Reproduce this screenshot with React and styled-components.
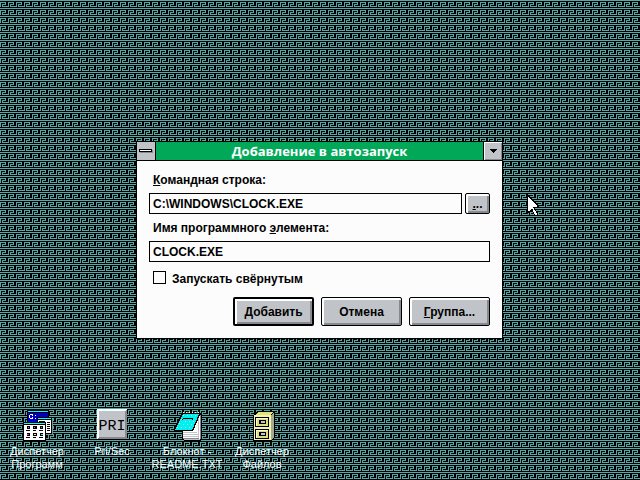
import React from 'react';
import styled, { createGlobalStyle } from 'styled-components';

// 8x8 greek key, repeated over the whole desktop
const TILE = [
    '########',
    '........',
    '######..',
    '#....#..',
    '#.####..',
    '#.#.....',
    '#.######',
    '........',
];

const tilePath = TILE.map((row, y) =>
    row
        .split('')
        .map((c, x) => (c === '#' ? `M${x} ${y}h1v1h-1z` : ''))
        .join(''),
).join('');

const wallpaper = `data:image/svg+xml,${encodeURIComponent(
    `<svg xmlns="http://www.w3.org/2000/svg" width="8" height="8" shape-rendering="crispEdges"><path fill="#000" d="M0 0h8v8h-8z"/><path fill="#57a8a8" d="${tilePath}"/></svg>`,
)}`;

const GlobalStyle = createGlobalStyle`
    * {
        box-sizing: border-box;
    }
    body {
        margin: 0;
        background: #000 url("${wallpaper}");
        font-family: 'Liberation Sans', Arial, sans-serif;
        font-size: 12px;
        color: #000;
    }
    u {
        text-underline-offset: 1px;
    }
`;

const Desktop = styled.div`
    display: flex;
    flex-direction: column;
    align-items: center;
    min-height: 100vh;
    padding: 141px 1px 0 0;
`;

const Window = styled.section`
    width: 100%;
    max-width: 367px;
    border: 1px solid #000;
    background: #fcfcfc;
`;

const TitleBar = styled.header`
    display: flex;
    height: 19px;
    border-bottom: 1px solid #000;
    background: #00a858;
`;

const Title = styled.h1`
    flex: 1;
    margin: 0;
    font-family: 'Open Sans', 'Liberation Sans', sans-serif;
    font-size: 13px;
    font-weight: bold;
    line-height: 18px;
    text-align: center;
    color: #fff;
`;

const FrameButton = styled.button`
    display: flex;
    align-items: center;
    justify-content: center;
    width: 19px;
    padding: 0;
    border: 0;
    background: #c0c4c8;
`;

const SystemButton = styled(FrameButton)`
    border-right: 1px solid #000;
`;

const MinimizeButton = styled(FrameButton)`
    border-left: 1px solid #000;
    box-shadow: inset 1px 1px #fff, inset -1px -1px #868a8e;
`;

const Form = styled.form`
    display: flex;
    flex-direction: column;
    padding: 11px 12px 12px;
`;

const Field = styled.div`
    display: flex;
    flex-direction: column;
    gap: 5px;
    margin-bottom: ${(props) => (props.$last ? '9px' : '6px')};
`;

const Label = styled.label`
    padding-left: 4px;
    font-weight: bold;
    line-height: 16px;
`;

const InputRow = styled.div`
    display: flex;
    gap: 3px;
`;

const TextInput = styled.input`
    flex: 1;
    min-width: 0;
    height: 21px;
    padding: 0 3px;
    border: 1px solid #000;
    border-radius: 0;
    outline: 0;
    background: #fcfcfc;
    font: bold 12px 'Liberation Sans', Arial, sans-serif;
    color: #000;
`;

const CheckLabel = styled.label`
    display: flex;
    align-items: flex-start;
    gap: 6px;
    height: 13px;
    padding-left: 4px;
    font-weight: bold;
    line-height: 16px;
`;

const Checkbox = styled.input`
    appearance: none;
    width: 13px;
    height: 13px;
    margin: 0;
    border: 1px solid #000;
    background: #fcfcfc;

    &:checked {
        background: linear-gradient(#000, #000) center / 7px 7px no-repeat;
    }
`;

const Buttons = styled.div`
    display: flex;
    justify-content: flex-end;
    gap: 7px;
    margin-top: 13px;
`;

const Button = styled.button`
    width: 81px;
    height: 29px;
    padding: 0;
    border: ${(props) => (props.$primary ? '2px' : '1px')} solid #000;
    border-radius: 2px;
    background: #c0c4c8;
    box-shadow: inset 2px 2px #fff, inset -2px -2px #868a8e;
    font: bold 12px 'Liberation Sans', Arial, sans-serif;
    color: #000;
`;

const BrowseButton = styled(Button)`
    width: 25px;
    height: 21px;
`;

const IconRow = styled.nav`
    display: flex;
    align-self: stretch;
    align-items: flex-start;
    gap: 1px;
    margin-top: auto;
    padding-bottom: 9px;
`;

const DesktopIcon = styled.button`
    display: flex;
    flex-direction: column;
    align-items: center;
    gap: 4px;
    width: 74px;
    padding: 0;
    border: 0;
    background: none;
    font: 11px 'Liberation Sans', Arial, sans-serif;
    line-height: 13px;
    white-space: pre;
    color: #fff;
`;

const Picture = styled.svg`
    display: block;
    width: 32px;
    height: 32px;
`;

const Pointer = styled.svg`
    position: absolute;
    top: 195px;
    left: 527px;
    pointer-events: none;
`;

const ProgramManagerIcon = () => (
    <Picture viewBox="0 0 32 32" shapeRendering="crispEdges">
        <path fill="#000" d="M6 1h22v15H6z" />
        <path fill="#00fcfc" d="M7 2h20v1H7z" />
        <path fill="#0000c8" d="M7 4h20v9H7z" />
        <path fill="#fff" d="M9 5h3v1H9zM8 6h1v3H8zM9 9h3v1H9zM11 6h1v1h-1zM11 8h1v1h-1zM14 6h1v1h-1zM14 9h1v1h-1z" />
        <path fill="#868a8e" d="M18 10h14v16H18z" />
        <path fill="#000" d="M16 8h15v17H16z" />
        <path fill="#00fcfc" d="M17 9h13v1H17z" />
        <path fill="#fff" d="M17 11h13v13H17z" />
        <path fill="#000" d="M26 13h3v1h-3zM26 15h3v1h-3zM26 17h3v1h-3zM26 19h3v1h-3zM26 21h3v1h-3zM18 12h6v1h-6z" />
        <path fill="#000" d="M2 13h23v19H2z" />
        <path fill="#00fcfc" d="M3 14h21v1H3z" />
        <path fill="#fff" d="M3 16h21v15H3z" />
        <path fill="#000" d="M6 17h3v3H6zM12 17h4v3h-4zM19 17h3v3h-3zM5 21h4v1H5zM12 21h3v1h-3zM18 21h4v1h-4zM6 24h3v3H6zM12 24h4v3h-4zM19 24h3v3h-3zM5 28h4v1H5zM12 28h3v1h-3zM18 28h4v1h-4z" />
        <path fill="#868a8e" d="M7 18h1v1H7zM13 18h1v1h-1zM20 18h1v1h-1z" />
        <path fill="#fc00fc" d="M6 25h2v1H6z" />
        <path fill="#fcfc00" d="M13 25h2v1h-2z" />
        <path fill="#00fcfc" d="M20 25h2v1h-2z" />
    </Picture>
);

const PriSecIcon = () => (
    <Picture viewBox="0 0 32 32" shapeRendering="crispEdges">
        <path fill="#868a8e" d="M1 0h30v30H1z" />
        <path fill="#fff" d="M1 0h30l-2 2H3v26l-2 2z" />
        <path fill="#c0c4c8" d="M3 2h26v26H3z" />
        <text x="16" y="21" fontFamily="Liberation Mono, monospace" fontSize="15" textAnchor="middle" fill="#000">
            PRI
        </text>
    </Picture>
);

const NotepadIcon = () => (
    <Picture viewBox="0 0 32 32" shapeRendering="crispEdges">
        <path fill="#000" d="M12 4h18v1h1v26h-1v1H13v-1h-2V20z" />
        <path fill="#fff" d="M12 21h10l5-12v20H12z" />
        <path fill="#c0c4c8" d="M12 23h14v1H12zM12 25h15v1H12zM12 27h16v1H12zM13 30h16v1H13zM27 6h1v23h-1z" />
        <path fill="#fff" d="M28 6h1v24h-1z" />
        <path fill="#868a8e" d="M29 6h1v24h-1zM12 29h16v1H12z" />
        <path fill="#000" d="M11 4h18v2l-7 16H3v-2z" />
        <path fill="#00f0f0" d="M12 5h16l-7 16H4z" />
        <path fill="#a8fcfc" d="M12 6h1v1h-1zM16 6h1v1h-1zM20 6h1v1h-1zM24 6h1v1h-1zM10 10h1v1h-1zM14 12h1v1h-1zM18 12h1v1h-1zM22 12h1v1h-1zM8 14h1v1H8zM12 15h1v1h-1zM16 15h1v1h-1zM20 15h1v1h-1zM6 18h1v1H6zM10 18h1v1h-1zM14 18h1v1h-1zM18 18h1v1h-1z" />
        <path fill="#000" d="M12 9h10v1H12zM11 10h1v1h-1zM21 10h1v1h-1z" />
        <path fill="#fff" d="M12 3h1v1h-1zM15 3h1v1h-1zM18 3h1v1h-1zM21 3h1v1h-1zM24 3h1v1h-1zM27 3h1v1h-1z" />
    </Picture>
);

const CabinetIcon = () => (
    <Picture viewBox="0 0 32 32" shapeRendering="crispEdges">
        <path fill="#000" d="M12 2h17v26l-4 4H7V6z" />
        <path fill="#e4e478" d="M12 3h15l-3 3H9z" />
        <path fill="#a8a890" d="M25 6l3-3v25l-3 3z" />
        <path fill="#f4f4b0" d="M8 6h17v25H8z" />
        <path fill="#000" d="M9 8h14v10H9zM9 20h14v10H9z" />
        <path fill="#dcdc80" d="M10 9h12v8H10zM10 21h12v8H10z" />
        <path fill="#fcfce0" d="M10 9h12v1H10zM10 9h1v8h-1zM10 21h12v1H10zM10 21h1v8h-1z" />
        <path fill="#000" d="M13 11h7v4h-7zM13 23h7v4h-7z" />
        <path fill="#c0c4c8" d="M15 12h4v2h-4zM15 24h4v2h-4z" />
    </Picture>
);

const icons = [
    { label: 'Диспетчер\nПрограмм', Icon: ProgramManagerIcon },
    { label: 'Pri/Sec', Icon: PriSecIcon },
    { label: 'Блокнот -\nREADME.TXT', Icon: NotepadIcon },
    { label: 'Диспетчер\nФайлов', Icon: CabinetIcon },
];

const App = () => (
    <>
        <GlobalStyle />
        <Desktop>
            <Window aria-labelledby="title">
                <TitleBar>
                    <SystemButton type="button" aria-label="Системное меню">
                        <svg width="14" height="4" shapeRendering="crispEdges">
                            <path fill="#868a8e" d="M1 1h13v3H1z" />
                            <path fill="#000" d="M0 0h13v3H0z" />
                            <path fill="#fff" d="M1 1h11v1H1z" />
                        </svg>
                    </SystemButton>
                    <Title id="title">Добавление в автозапуск</Title>
                    <MinimizeButton type="button" aria-label="Свернуть">
                        <svg width="7" height="4" shapeRendering="crispEdges">
                            <path d="M0 0h7v1H0zM1 1h5v1H1zM2 2h3v1H2zM3 3h1v1H3z" />
                        </svg>
                    </MinimizeButton>
                </TitleBar>
                <Form onSubmit={(e) => e.preventDefault()}>
                    <Field>
                        <Label htmlFor="command">
                            <u>К</u>омандная строка:
                        </Label>
                        <InputRow>
                            <TextInput id="command" defaultValue="C:\WINDOWS\CLOCK.EXE" spellCheck="false" />
                            <BrowseButton type="button">
                                <u>.</u>..
                            </BrowseButton>
                        </InputRow>
                    </Field>
                    <Field $last>
                        <Label htmlFor="name">
                            Имя программного <u>э</u>лемента:
                        </Label>
                        <InputRow>
                            <TextInput id="name" defaultValue="CLOCK.EXE" spellCheck="false" />
                        </InputRow>
                    </Field>
                    <CheckLabel>
                        <Checkbox type="checkbox" />
                        Запускать свёрнутым
                    </CheckLabel>
                    <Buttons>
                        <Button type="submit" $primary>
                            Добавить
                        </Button>
                        <Button type="button">Отмена</Button>
                        <Button type="button">
                            <u>Г</u>руппа...
                        </Button>
                    </Buttons>
                </Form>
            </Window>
            <IconRow>
                {icons.map(({ label, Icon }) => (
                    <DesktopIcon key={label} type="button">
                        <Icon />
                        {label}
                    </DesktopIcon>
                ))}
            </IconRow>
        </Desktop>
        <Pointer width="12" height="21" shapeRendering="crispEdges" aria-hidden="true">
            <path fill="#000" d="M0 0h1l11 11v2H8l3 6v2H8l-3-6-3 3H0z" />
            <path fill="#fff" d="M1 2l9 9v1H6l4 7v1H8l-3-7-3 3H1z" />
        </Pointer>
    </>
);

export default App;
